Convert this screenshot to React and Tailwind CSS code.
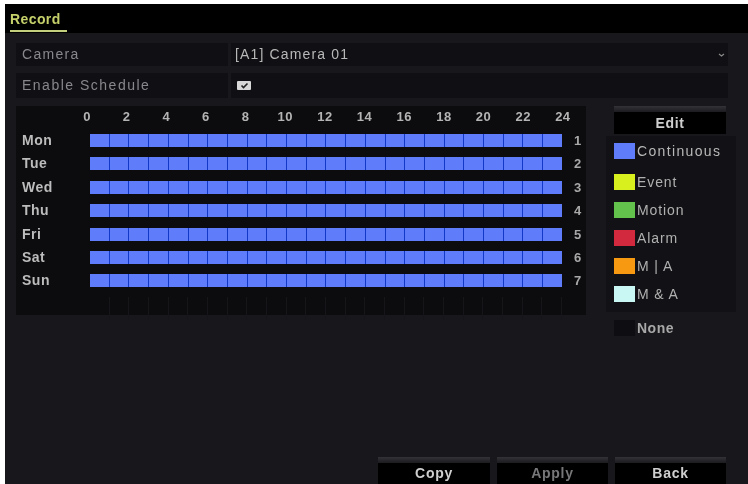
import React from 'react';

const days = ['Mon', 'Tue', 'Wed', 'Thu', 'Fri', 'Sat', 'Sun'];
const hours = [0, 2, 4, 6, 8, 10, 12, 14, 16, 18, 20, 22, 24];
const cells = Array.from({ length: 24 }, (_, i) => i);

const legend = [
  { label: 'Event', swatch: 'bg-[#d9f01f]' },
  { label: 'Motion', swatch: 'bg-[#62c24c]' },
  { label: 'Alarm', swatch: 'bg-[#d3293f]' },
  { label: 'M | A', swatch: 'bg-[#f79a12]' },
  { label: 'M & A', swatch: 'bg-[#c9f8f4]' },
];

const ActionButton = ({ label, dim = false, className = '' }) => (
  <div className={`flex flex-col ${className}`}>
    <div className="h-[6px] bg-gradient-to-b from-[#333337] to-[#1c1c20]" />
    <div className={`flex flex-1 items-center justify-center bg-black text-[14px] font-bold tracking-[0.7px] ${dim ? 'text-[#77777a]' : 'text-[#cfcfcf]'}`}>
      {label}
    </div>
  </div>
);

const ScheduleRow = ({ day, index }) => (
  <div className="flex h-[23.4px] items-start">
    <div className="w-[74px] pl-[6px] text-[14px] leading-[15px] font-bold tracking-[0.5px] text-[#bcbcbc]">{day}</div>
    <div className="mt-[1px] flex h-[13px] w-[472px] bg-[#1238c8]">
      {cells.map((c) => (
        <div key={c} className="flex-1 border-r border-[#1238c8] bg-[#5f7cfb] last:border-r-0" />
      ))}
    </div>
    <div className="ml-[12px] text-[13px] leading-[15px] font-bold text-[#a8a8a8]">{index}</div>
  </div>
);

export default function App() {
  return (
    <div className="h-[484px] w-[748px] overflow-hidden bg-white pt-[4px] pl-[5px] font-['Liberation_Sans',Arial,sans-serif]">
      <div className="flex h-[480px] flex-col bg-[#17171c] blur-[0.5px]">
        {/* title bar */}
        <div className="h-[29px] shrink-0 bg-black pl-[5px] pt-[8px]">
          <div className="w-[57px] border-b-2 border-[#c3cf7c] pb-[3px] text-[14px] leading-[15px] font-bold tracking-[0.4px] text-[#c5d06a]">
            Record
          </div>
        </div>

        <div className="flex flex-1 flex-col pl-[11px] pt-[10px]">
          {/* settings rows */}
          <div className="flex h-[23px] w-[712px] gap-[3px]">
            <div className="flex w-[212px] items-center bg-[#101014] pl-[6px] text-[14px] tracking-[1.3px] text-[#88888c]">Camera</div>
            <div className="flex flex-1 items-center justify-between bg-[#101014] pr-[3px] pl-[4px] text-[14px] tracking-[1.15px] text-[#b8b8b8]">
              <span>[A1] Camera 01</span>
              <svg width="7" height="4" viewBox="0 0 7 4"><path d="M1 1 L3.5 3 L6 1" fill="none" stroke="#8a8a8a" strokeWidth="1.2" /></svg>
            </div>
          </div>
          <div className="mt-[7px] flex h-[25px] w-[712px] gap-[3px]">
            <div className="flex w-[212px] items-center bg-[#101014] pl-[6px] text-[14px] tracking-[1.5px] text-[#88888c]">Enable Schedule</div>
            <div className="flex flex-1 items-center bg-[#101014] pl-[6px]">
              <div className="flex h-[9px] w-[14px] items-center justify-center rounded-[1px] bg-[#d8d8d8]">
                <svg width="9" height="7" viewBox="0 0 9 7"><path d="M1.5 3.5 L3.5 5.5 L7.5 1.5" fill="none" stroke="#222" strokeWidth="1.6" /></svg>
              </div>
            </div>
          </div>

          <div className="mt-[8px] flex">
            {/* schedule grid */}
            <div className="h-[209px] w-[570px] shrink-0 bg-[#0c0c0f]">
              <div className="ml-[71px] flex h-[27px] w-[476px] justify-between pt-[4px]">
                {hours.map((h) => (
                  <div key={h} className="flex w-0 justify-center text-[13px] leading-[14px] font-bold tracking-[0.5px] text-[#b4b4b4]">{h}</div>
                ))}
              </div>
              {days.map((d, i) => (
                <ScheduleRow key={d} day={d} index={i + 1} />
              ))}
              <div className="ml-[74px] flex h-[24px] w-[472px]">
                {cells.map((c) => (
                  <div key={c} className="flex-1 border-r border-[#16161a]" />
                ))}
              </div>
            </div>

            {/* edit + legend */}
            <div className="ml-[20px] flex w-[130px] flex-col">
              <ActionButton label="Edit" className="ml-[8px] h-[28px] w-[112px]" />
              <div className="mt-[2px] h-[176px] bg-[#121216] pl-[8px] pt-[7px]">
                <div className="mb-[15px] flex h-[16px] items-center">
                  <div className="h-[16px] w-[21px] bg-[#5f7cfb]" />
                  <span className="ml-[2px] text-[14px] tracking-[1.35px] text-[#b8b8b8]">Continuous</span>
                </div>
                <div className="flex flex-col gap-[12px]">
                  {legend.map((item) => (
                    <div key={item.label} className="flex h-[16px] items-center">
                      <div className={`h-[16px] w-[21px] ${item.swatch}`} />
                      <span className="ml-[2px] text-[14px] tracking-[0.9px] text-[#b0b0b0]">{item.label}</span>
                    </div>
                  ))}
                </div>
              </div>
              <div className="mt-[8px] flex h-[16px] items-center pl-[8px]">
                <div className="h-[16px] w-[21px] bg-[#0e0e12]" />
                <span className="ml-[2px] text-[14px] font-bold tracking-[0.5px] text-[#a8a8a8]">None</span>
              </div>
            </div>
          </div>

          {/* bottom buttons */}
          <div className="mt-auto flex h-[27px] pl-[362px]">
            <ActionButton label="Copy" className="w-[112px]" />
            <ActionButton label="Apply" dim className="ml-[7px] w-[111px]" />
            <ActionButton label="Back" className="ml-[7px] w-[111px]" />
          </div>
        </div>
      </div>
    </div>
  );
}
